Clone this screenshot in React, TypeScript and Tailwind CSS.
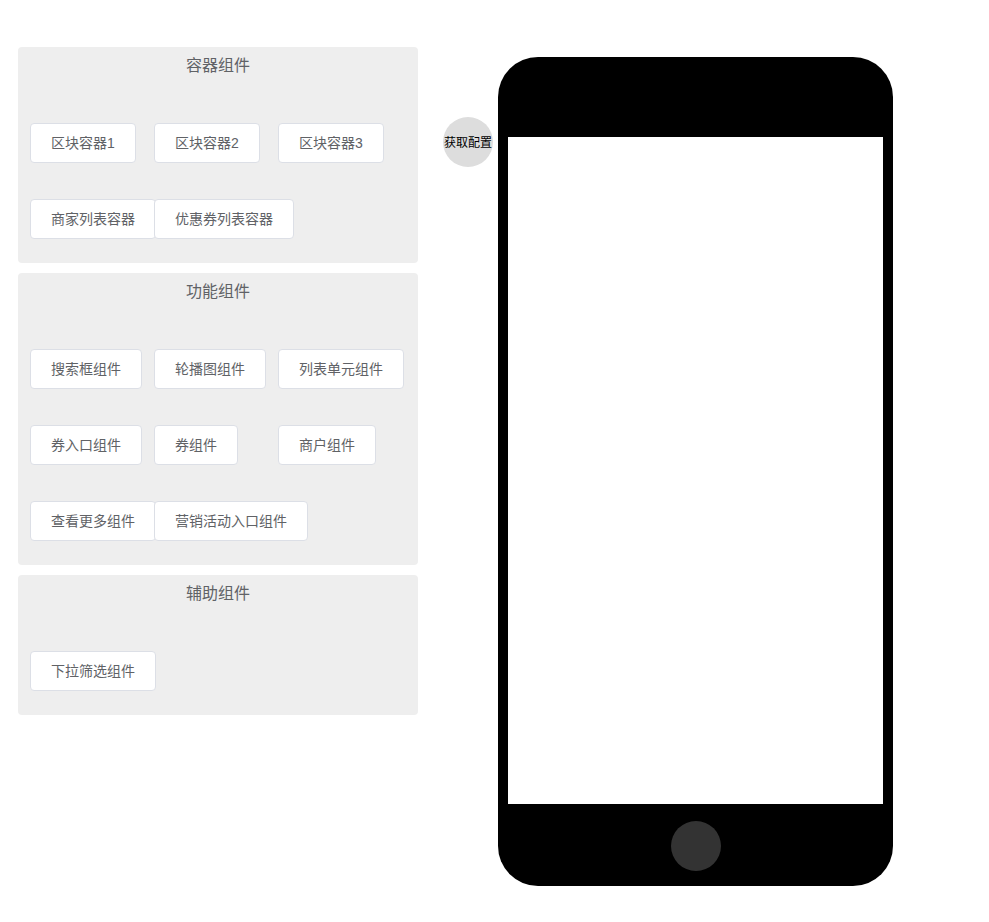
type Group = { title: string; items: string[] };

const groups: Group[] = [
  { title: "容器组件", items: ["区块容器1", "区块容器2", "区块容器3", "商家列表容器", "优惠券列表容器"] },
  {
    title: "功能组件",
    items: ["搜索框组件", "轮播图组件", "列表单元组件", "券入口组件", "券组件", "商户组件", "查看更多组件", "营销活动入口组件"],
  },
  { title: "辅助组件", items: ["下拉筛选组件"] },
];

function ComponentGroup({ title, items }: Group) {
  return (
    <section className="rounded bg-[#eeeeee] pb-6 text-[#606266]">
      <h2 className="pt-1.5 text-center text-base leading-[26px]">{title}</h2>
      <ul className="grid grid-cols-[repeat(3,124px)] gap-y-9 px-3 pt-11">
        {items.map((item) => (
          <li key={item} className="flex">
            <button
              type="button"
              className="h-10 shrink-0 rounded border border-[#dcdfe6] bg-white px-5 text-sm leading-none whitespace-nowrap hover:border-[#c6e2ff] hover:text-[#409eff]"
            >
              {item}
            </button>
          </li>
        ))}
      </ul>
    </section>
  );
}

export default function App() {
  return (
    <main className="flex min-h-screen items-start bg-white pt-[47px] pb-9 pl-[18px] font-['Liberation_Sans','Noto_Sans_CJK_SC',sans-serif]">
      <div className="flex w-[400px] shrink-0 flex-col gap-2.5">
        {groups.map((group) => (
          <ComponentGroup key={group.title} {...group} />
        ))}
      </div>
      <button
        type="button"
        className="mt-[70px] ml-[25px] size-[50px] shrink-0 rounded-full bg-[#dddddd] pt-0.5 text-xs whitespace-nowrap text-black"
      >
        获取配置
      </button>
      <div className="mt-2.5 ml-[5px] flex shrink-0 flex-col items-center rounded-[40px] bg-black px-2.5 pt-20 pb-[15px]">
        <div className="h-[667px] w-[375px] bg-white" />
        <button type="button" aria-label="Home" className="mt-[17px] size-[50px] rounded-full bg-[#333333]" />
      </div>
    </main>
  );
}
